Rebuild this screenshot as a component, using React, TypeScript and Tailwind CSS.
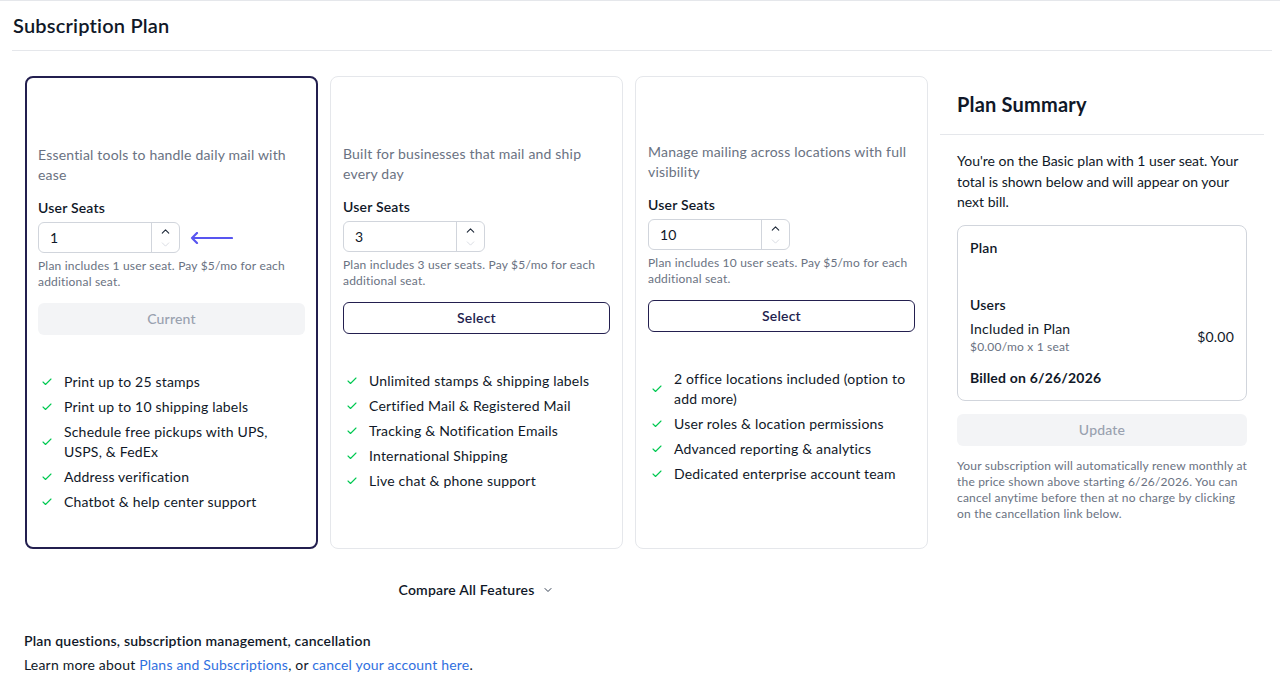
import { ChevronDown, ChevronUp, Check } from 'lucide-react'

type Plan = {
  desc: string
  seats: string
  helper: string
  current: boolean
  pad: string
  features: string[]
}

const plans: Plan[] = [
  {
    desc: 'Essential tools to handle daily mail with ease',
    seats: '1',
    helper: 'Plan includes 1 user seat. Pay $5/mo for each additional seat.',
    current: true,
    pad: 'pt-[67px]',
    features: [
      'Print up to 25 stamps',
      'Print up to 10 shipping labels',
      'Schedule free pickups with UPS, USPS, & FedEx',
      'Address verification',
      'Chatbot & help center support',
    ],
  },
  {
    desc: 'Built for businesses that mail and ship every day',
    seats: '3',
    helper: 'Plan includes 3 user seats. Pay $5/mo for each additional seat.',
    current: false,
    pad: 'pt-[67px]',
    features: [
      'Unlimited stamps & shipping labels',
      'Certified Mail & Registered Mail',
      'Tracking & Notification Emails',
      'International Shipping',
      'Live chat & phone support',
    ],
  },
  {
    desc: 'Manage mailing across locations with full visibility',
    seats: '10',
    helper: 'Plan includes 10 user seats. Pay $5/mo for each additional seat.',
    current: false,
    pad: 'pt-[65px]',
    features: [
      '2 office locations included (option to add more)',
      'User roles & location permissions',
      'Advanced reporting & analytics',
      'Dedicated enterprise account team',
    ],
  },
]

function SeatInput({ value, arrow }: { value: string; arrow: boolean }) {
  return (
    <div className="mt-1 flex items-center">
      <div className="flex h-[31px] w-[142px] rounded-md border border-gray-300 bg-white">
        <div className="flex flex-1 items-center pl-[11px] text-sm text-gray-900">{value}</div>
        <div className="flex w-[28px] flex-col items-center justify-center border-l border-gray-300">
          <ChevronUp className="h-[13px] w-[13px] text-gray-800" strokeWidth={2} />
          <ChevronDown className="h-[13px] w-[13px] text-gray-300" strokeWidth={1.5} />
        </div>
      </div>
      {arrow && (
        <svg className="ml-[10px]" width="43" height="12" viewBox="0 0 43 12" fill="none">
          <path d="M2 6H42M7 1L2 6L7 11" stroke="#5855f0" strokeWidth="2.2" strokeLinecap="round" strokeLinejoin="round" />
        </svg>
      )}
    </div>
  )
}

function PlanCard({ plan }: { plan: Plan }) {
  return (
    <div
      className={
        plan.current
          ? 'h-[473px] rounded-lg border-2 border-[#231f4f] px-[11px] pt-[67px]'
          : `h-[473px] rounded-lg border border-gray-200 px-3 ${plan.pad}`
      }
    >
      <p className="text-sm leading-5 text-gray-500">{plan.desc}</p>
      <div className="mt-[13px] text-sm font-semibold leading-5 text-gray-900">User Seats</div>
      <SeatInput value={plan.seats} arrow={plan.current} />
      <p className="mt-[5px] text-xs leading-4 text-gray-500">{plan.helper}</p>
      {plan.current ? (
        <button className="mt-[13px] h-8 w-full rounded-md bg-gray-100 text-sm font-medium text-gray-400">
          Current
        </button>
      ) : (
        <button className="mt-[13px] h-8 w-full rounded-md border border-[#231f4f] text-sm font-semibold text-[#231f4f]">
          Select
        </button>
      )}
      <ul className="mt-[37px] flex flex-col gap-[5px]">
        {plan.features.map((f) => (
          <li key={f} className="flex items-center gap-[11px] pl-[3px] text-sm leading-5 text-gray-900">
            <Check className="h-3 w-3 shrink-0 text-green-500" strokeWidth={2.2} />
            <span>{f}</span>
          </li>
        ))}
      </ul>
    </div>
  )
}

export default function App() {
  return (
    <div className="min-h-screen border-t border-gray-200 bg-white font-['Lato',sans-serif] tracking-[0.012em] text-gray-900">
      <div className="ml-3 mr-2 flex h-[50px] items-center border-b border-gray-200">
        <h1 className="pl-px pb-0.5 text-xl font-semibold">Subscription Plan</h1>
      </div>

      <div className="flex gap-3 pl-[25px] pt-[25px]">
        <div className="w-[903px]">
          <div className="grid grid-cols-3 gap-[12px]">
            {plans.map((p) => (
              <PlanCard key={p.seats} plan={p} />
            ))}
          </div>

          <div className="mt-[31px] flex items-center justify-center gap-2 text-sm font-semibold leading-5">
            <span>Compare All Features</span>
            <ChevronDown className="h-3 w-3 text-gray-700" strokeWidth={2} />
          </div>
        </div>

        <aside className="w-[324px]">
          <div className="border-b border-gray-200 px-[17px] pb-4 pt-[14px]">
            <h2 className="text-xl font-bold leading-7">Plan Summary</h2>
          </div>
          <div className="px-[17px] pt-4">
            <p className="text-sm leading-[20.5px] tracking-normal text-gray-900">
              You're on the Basic plan with 1 user seat. Your total is shown below and will appear on your next bill.
            </p>
            <div className="mt-3 rounded-lg border border-gray-300 px-3 pb-3 pt-3">
              <div className="text-sm font-semibold leading-5">Plan</div>
              <div className="mt-[37px] text-sm font-semibold leading-5">Users</div>
              <div className="mt-1 flex items-center justify-between">
                <div>
                  <div className="text-sm leading-5">Included in Plan</div>
                  <div className="text-xs leading-4 text-gray-500">$0.00/mo x 1 seat</div>
                </div>
                <div className="text-sm">$0.00</div>
              </div>
              <div className="mt-[13px] text-sm font-bold leading-5">Billed on 6/26/2026</div>
            </div>
            <button className="mt-[13px] h-8 w-full rounded-md bg-gray-100 text-sm font-medium text-gray-400">
              Update
            </button>
            <p className="mt-3 text-xs leading-[16.3px] text-gray-500">
              Your subscription will automatically renew monthly at the price shown above starting 6/26/2026. You can
              cancel anytime before then at no charge by clicking on the cancellation link below.
            </p>
          </div>
        </aside>
      </div>

      <div className="pl-6 pt-[31px]">
        <div className="text-sm font-semibold leading-5">Plan questions, subscription management, cancellation</div>
        <p className="mt-1 text-sm leading-5">
          Learn more about <a className="text-[#2f6fe0]">Plans and Subscriptions</a>, or{' '}
          <a className="text-[#2f6fe0]">cancel your account here</a>.
        </p>
      </div>
    </div>
  )
}
